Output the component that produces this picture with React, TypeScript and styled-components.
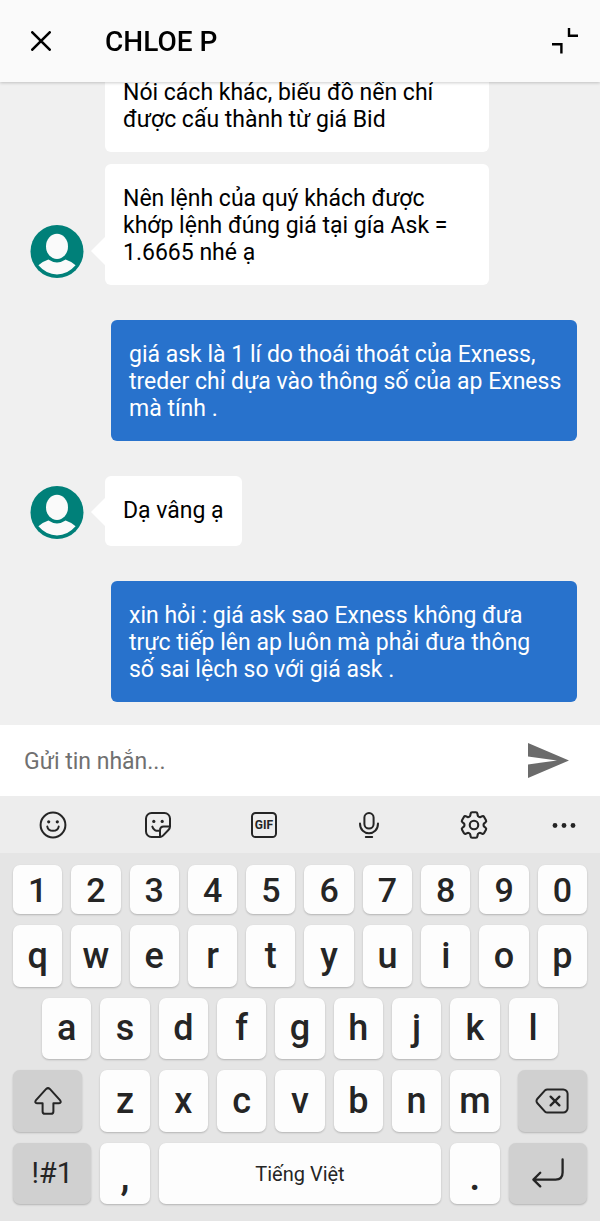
import React from "react";
import styled, { createGlobalStyle, css } from "styled-components";
import { HiOutlineCog6Tooth } from "react-icons/hi2";

const GlobalStyle = createGlobalStyle`
  * { box-sizing: border-box; }
  body { margin: 0; background: #f0f0f0; }
  body, button, input { font-family: Roboto, "Noto Sans", sans-serif; }
  button { border: 0; padding: 0; background: none; color: inherit; cursor: pointer; }
  svg { display: block; }
`;

const Screen = styled.div`
  display: flex;
  flex-direction: column;
  height: 100vh;
  color: #000;
`;

const Header = styled.header`
  display: flex;
  align-items: center;
  flex: none;
  height: 82px;
  padding: 0 22px 0 31px;
  background: #fafafa;
  box-shadow: 0 1px 3px rgba(0, 0, 0, 0.2);
  z-index: 1;
`;

const Title = styled.h1`
  flex: 1;
  margin: 0;
  padding: 2px 0 0 54px;
  font-size: 28px;
  font-weight: 500;
  line-height: 36px;
`;

const HeaderButton = styled.button`
  flex: none;
`;

const Messages = styled.main`
  display: flex;
  flex-direction: column-reverse;
  flex: 1;
  min-height: 0;
  overflow-y: auto;
  scrollbar-width: none;
  background: #f0f0f0;
`;

const Thread = styled.ol`
  display: flex;
  flex-direction: column;
  flex: none;
  gap: 35px;
  margin: 0;
  padding: 0 23px 23px 30px;
  list-style: none;
`;

const Turn = styled.li`
  display: flex;
  align-items: flex-end;
`;

const AvatarSlot = styled.div`
  flex: none;
  width: 75px;
  padding-bottom: 7px;
`;

const Stack = styled.div`
  display: flex;
  flex: 1;
  flex-direction: column;
  align-items: flex-start;
  gap: 12px;
`;

const Bubble = styled.p<{ $sent?: boolean; $tail?: boolean }>`
  position: relative;
  min-height: 70px;
  max-width: 384px;
  margin: 0;
  padding: 21px 18px 19px;
  border-radius: 6px;
  background: #fff;
  font-size: 23px;
  line-height: 27px;

  ${(p) =>
    p.$sent &&
    css`
      flex: 1;
      max-width: none;
      margin-left: 81px;
      padding-right: 0;
      background: #2872cc;
      color: #fff;
      white-space: pre-line;
    `}

  ${(p) =>
    p.$tail &&
    css`
      &::before {
        content: "";
        position: absolute;
        left: -14px;
        bottom: 20px;
        border: 14px solid transparent;
        border-left-width: 0;
        border-right-color: #fff;
      }
    `}
`;

const Composer = styled.form`
  display: flex;
  align-items: center;
  flex: none;
  height: 71px;
  padding: 0 31px 0 24px;
  background: #fff;
`;

const MessageInput = styled.input`
  flex: 1;
  min-width: 0;
  padding: 2px 0 0;
  border: 0;
  outline: 0;
  background: none;
  font-size: 23px;
  line-height: 28px;
  &::placeholder { color: #707070; opacity: 1; }
`;

const Toolbar = styled.div`
  display: flex;
  flex: none;
  height: 57px;
  background: #ededed;
  color: #252525;
`;

const Tool = styled.button<{ $last?: boolean }>`
  display: flex;
  align-items: center;
  justify-content: center;
  flex: ${(p) => (p.$last ? "0 0 73px" : "1")};
`;

const Keyboard = styled.section`
  display: grid;
  grid-template-columns: repeat(20, minmax(0, 1fr));
  grid-template-rows: 4fr repeat(4, 5fr);
  gap: 11px 9px;
  flex: none;
  height: 368px;
  padding: 12px 13px 17px;
  background: #e5e5e5;
  color: #252525;
`;

type KeyKind = "digit" | "letter" | "punct" | "space" | "symbol";

const keyText: Record<KeyKind, { size: number; weight: number; drop: number }> = {
  digit: { size: 34, weight: 500, drop: 0 },
  letter: { size: 36, weight: 500, drop: 0 },
  punct: { size: 40, weight: 500, drop: 8 },
  space: { size: 20, weight: 400, drop: 2 },
  symbol: { size: 29, weight: 400, drop: 0 },
};

const Key = styled.button<{
  $kind: KeyKind;
  $span?: number;
  $start?: number;
  $dark?: boolean;
  $inset?: "left" | "right";
}>`
  display: flex;
  align-items: center;
  justify-content: center;
  grid-column: ${(p) => p.$start ?? "auto"} / span ${(p) => p.$span ?? 2};
  margin-left: ${(p) => (p.$inset === "left" ? 9 : 0)}px;
  margin-right: ${(p) => (p.$inset === "right" ? 9 : 0)}px;
  padding-top: ${(p) => keyText[p.$kind].drop}px;
  border-radius: 7px;
  background: ${(p) => (p.$dark ? "#d0d0d0" : "#fdfdfd")};
  box-shadow: 0 1px 2px rgba(0, 0, 0, 0.22);
  font-size: ${(p) => keyText[p.$kind].size}px;
  font-weight: ${(p) => keyText[p.$kind].weight};
  line-height: 40px;
`;

const Avatar = () => (
  <svg width="54" height="54" viewBox="0 0 54 54" role="img" aria-label="Chloe P">
    <circle cx="27" cy="27.4" r="26.5" fill="#008079" />
    <ellipse cx="27" cy="22.4" rx="11" ry="12.6" fill="#fafafa" />
    <path
      d="M8.4 41.2 Q13 37.4 18.4 35.6 Q27 41.4 35.6 35.6 Q41 37.4 45.6 41.2 Q37.6 50.4 27 50.4 Q16.4 50.4 8.4 41.2Z"
      fill="#fafafa"
    />
  </svg>
);

const stroke = {
  fill: "none",
  stroke: "currentColor",
  strokeWidth: 2,
  strokeLinecap: "round",
  strokeLinejoin: "round",
} as const;

const CloseIcon = () => (
  <svg width="20" height="20" viewBox="0 0 20 20" {...stroke} strokeWidth={2.6}>
    <path d="M1.3 1.3 18.7 18.7M18.7 1.3 1.3 18.7" />
  </svg>
);

const CollapseIcon = () => (
  <svg width="26" height="26" viewBox="0 0 26 26" fill="none" stroke="currentColor" strokeWidth="2.4">
    <path d="M17 0V7.8H26M0 16.2H9.4V25.4" />
  </svg>
);

const SendIcon = () => (
  <svg width="41" height="35" viewBox="0 0 41 35" fill="#6b6b6b">
    <path d="M0 0 41 17.5 0 35V21.4L29 17.5 0 13.6Z" />
  </svg>
);

const SmileIcon = () => (
  <svg width="28" height="28" viewBox="0 0 28 28" {...stroke}>
    <circle cx="14" cy="14" r="12.4" />
    <path d="M8.3 15.6C9.3 21.2 18.7 21.2 19.7 15.6" />
    <g fill="currentColor" stroke="none">
      <circle cx="9.7" cy="10.8" r="1.6" />
      <circle cx="18.3" cy="10.8" r="1.6" />
    </g>
  </svg>
);

const StickerIcon = () => (
  <svg width="28" height="28" viewBox="0 0 28 28" {...stroke}>
    <path d="M15.8 26H7.6A5.6 5.6 0 0 1 2 20.4V7.6A5.6 5.6 0 0 1 7.6 2H20.4A5.6 5.6 0 0 1 26 7.6V15.4C26 17 25.4 18 24.4 19L19 24.6C18 25.6 17 26 15.8 26Z" />
    <path d="M16 25.6V19.4C16 17 17.4 15.6 19.8 15.6H25.6M8.3 15.6C9 18.6 12 20.4 15.4 19.6" />
    <g fill="currentColor" stroke="none">
      <circle cx="9.8" cy="10.4" r="1.6" />
      <circle cx="18.2" cy="10.4" r="1.6" />
    </g>
  </svg>
);

const GifIcon = () => (
  <svg width="28" height="28" viewBox="0 0 28 28" {...stroke}>
    <rect x="2" y="2" width="24" height="24" rx="3.6" />
    <text
      x="14"
      y="18"
      textAnchor="middle"
      fontSize="12"
      fontWeight="700"
      fill="currentColor"
      stroke="none"
    >
      GIF
    </text>
  </svg>
);

const MicIcon = () => (
  <svg width="28" height="28" viewBox="0 0 28 28" {...stroke}>
    <rect x="9.4" y="2" width="9.2" height="15.6" rx="4.6" />
    <path d="M5 12.4C5 25.6 23 25.6 23 12.4M10.8 26H17.2" />
  </svg>
);

const MoreIcon = () => (
  <svg width="24" height="6" viewBox="0 0 24 6" fill="currentColor">
    <circle cx="3" cy="3.5" r="2.4" />
    <circle cx="12" cy="3.5" r="2.4" />
    <circle cx="21" cy="3.5" r="2.4" />
  </svg>
);

const ShiftIcon = () => (
  <svg width="28" height="28" viewBox="0 0 28 28" {...stroke}>
    <path d="M12.2 1.9Q14 .3 15.8 1.9L26.2 13.4Q27.6 15.8 25 16.2H19.4V24.4Q19.4 26.8 17 26.8H11Q8.6 26.8 8.6 24.4V16.2H3Q.4 15.8 1.8 13.4Z" />
  </svg>
);

const BackspaceIcon = () => (
  <svg width="34" height="26" viewBox="0 0 34 26" {...stroke}>
    <path d="M12.2 1.4H28.2A4.4 4.4 0 0 1 32.6 5.8V20.2A4.4 4.4 0 0 1 28.2 24.6H12.2Q11 24.6 10.2 23.8L2.2 15Q.8 13 2.2 11L10.2 2.2Q11 1.4 12.2 1.4Z" />
    <path d="M15.6 8.6 24.4 17.4M24.4 8.6 15.6 17.4" strokeWidth="2.3" />
  </svg>
);

const EnterIcon = () => (
  <svg width="32" height="30" viewBox="0 0 32 30" {...stroke} strokeWidth={2.3}>
    <path d="M30.6 1.5V14.6Q30.6 21.6 23.6 21.6H1.4M8.2 14.8 1.4 21.6 8.2 28.4" />
  </svg>
);

const tools = [
  { label: "Emoji", icon: <SmileIcon /> },
  { label: "Sticker", icon: <StickerIcon /> },
  { label: "GIF", icon: <GifIcon /> },
  { label: "Voice", icon: <MicIcon /> },
  { label: "Settings", icon: <HiOutlineCog6Tooth size={34} /> },
];

export default function App() {
  return (
    <Screen>
      <GlobalStyle />
      <Header>
        <HeaderButton type="button" aria-label="Close">
          <CloseIcon />
        </HeaderButton>
        <Title>CHLOE P</Title>
        <HeaderButton type="button" aria-label="Minimize">
          <CollapseIcon />
        </HeaderButton>
      </Header>

      <Messages>
        <Thread>
          <Turn>
            <AvatarSlot>
              <Avatar />
            </AvatarSlot>
            <Stack>
              <Bubble>Nói cách khác, biểu đồ nến chỉ được cấu thành từ giá Bid</Bubble>
              <Bubble $tail>
                Nên lệnh của quý khách được khớp lệnh đúng giá tại gía Ask = 1.6665 nhé ạ
              </Bubble>
            </Stack>
          </Turn>
          <Turn>
            <Bubble $sent>
              {"giá ask là 1 lí do thoái thoát của Exness,\ntreder chỉ dựa vào thông số của ap Exness\nmà tính ."}
            </Bubble>
          </Turn>
          <Turn>
            <AvatarSlot>
              <Avatar />
            </AvatarSlot>
            <Stack>
              <Bubble $tail>Dạ vâng ạ</Bubble>
            </Stack>
          </Turn>
          <Turn>
            <Bubble $sent>
              {"xin hỏi : giá ask sao Exness không đưa\ntrực tiếp lên ap luôn mà phải đưa thông\nsố sai lệch so với giá ask ."}
            </Bubble>
          </Turn>
        </Thread>
      </Messages>

      <Composer onSubmit={(e) => e.preventDefault()}>
        <MessageInput type="text" placeholder="Gửi tin nhắn..." aria-label="Gửi tin nhắn" />
        <HeaderButton type="submit" aria-label="Send">
          <SendIcon />
        </HeaderButton>
      </Composer>

      <Toolbar>
        {tools.map((t) => (
          <Tool key={t.label} type="button" aria-label={t.label}>
            {t.icon}
          </Tool>
        ))}
        <Tool $last type="button" aria-label="More">
          <MoreIcon />
        </Tool>
      </Toolbar>

      <Keyboard aria-label="Keyboard">
        {[..."1234567890"].map((c) => (
          <Key key={c} type="button" $kind="digit">{c}</Key>
        ))}
        {[..."qwertyuiop"].map((c) => (
          <Key key={c} type="button" $kind="letter">{c}</Key>
        ))}
        {[..."asdfghjkl"].map((c, i) => (
          <Key key={c} type="button" $kind="letter" $start={i === 0 ? 2 : undefined}>{c}</Key>
        ))}
        <Key type="button" $kind="symbol" $start={1} $span={3} $dark $inset="right" aria-label="Shift">
          <ShiftIcon />
        </Key>
        {[..."zxcvbnm"].map((c) => (
          <Key key={c} type="button" $kind="letter">{c}</Key>
        ))}
        <Key type="button" $kind="symbol" $span={3} $dark $inset="left" aria-label="Backspace">
          <BackspaceIcon />
        </Key>
        <Key type="button" $kind="symbol" $span={3} $dark>!#1</Key>
        <Key type="button" $kind="punct">,</Key>
        <Key type="button" $kind="space" $span={10}>Tiếng Việt</Key>
        <Key type="button" $kind="punct">.</Key>
        <Key type="button" $kind="symbol" $span={3} $dark aria-label="Enter">
          <EnterIcon />
        </Key>
      </Keyboard>
    </Screen>
  );
}
